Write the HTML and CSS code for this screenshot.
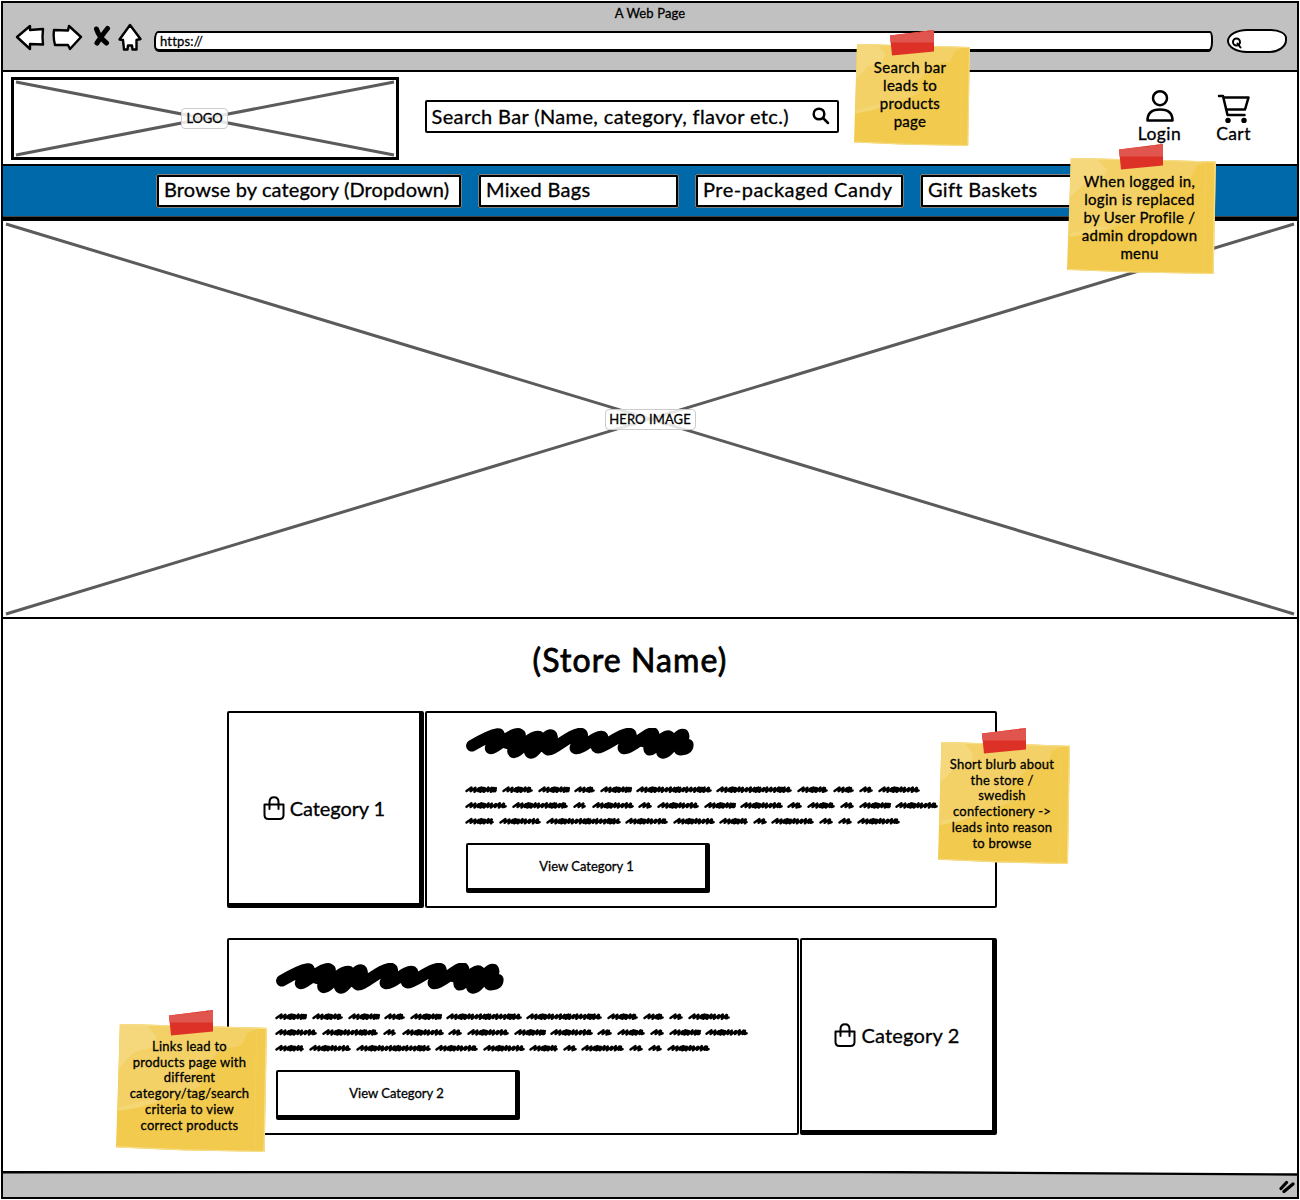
FILE: index.html
```html
<!DOCTYPE html>
<html lang="en">
<head>
<meta charset="utf-8">
<title>A Web Page</title>
<link rel="stylesheet" href="styles.css">
</head>
<body>
<svg class="defs" aria-hidden="true">
  <defs>
    <symbol id="paper" viewBox="0 0 100 100" preserveAspectRatio="none">
      <path d="M2.6 0 L50 1.4 L100 3 L98.5 100 L45 98.8 L0 96.5Z" fill="#f2ca4e"/>
      <path d="M2.6 0 L50 1.4 L95 3 L87 7 L83 17 L70 20 L57 34 L50 41 L57 48 L41 56 L26 62 L1 68Z" fill="#f3d166"/>
      <path d="M2.6 0 L20 .6 L27 10 L24 18 L12 22 L2 34Z" fill="#f5d87b"/>
      <path d="M2 65 L22 59 L29 60 L16 65 L2 68Z" fill="#f4d673"/>
      <path d="M2.6 .5 L50 1.8 L99.5 3.5 L98 99.5 L45 98.2 L.5 96" fill="none" stroke="#f7df8f" stroke-width=".8"/>
      <path d="M93 4 L92 99" fill="none" stroke="#f4d262" stroke-width=".5"/>
    </symbol>
    <symbol id="tape" viewBox="0 0 44 26">
      <path d="M0 5.500 L44 0 V21.500 L2 25.500Z" fill="#dd3127"/>
      <path d="M0 5.500 L44 0 V12.500 H.5Z" fill="#e0554d"/>
      <path d="M27 2.300 l3 -.4 -1 1.500z M36 1.200 l4 -.5 -2 1.500z" fill="#dd3127"/>
    </symbol>
    <symbol id="bag" viewBox="0 0 22 24">
      <path d="M1.500 8.500 H20.500 V19 Q20.500 23 16.500 23 H5.500 Q1.500 23 1.500 19Z M6.500 13 V6 Q6.500 1.200 11 1.200 T15.500 6 V13" fill="none" stroke="#000" stroke-width="2" stroke-linecap="round" stroke-linejoin="round"/>
    </symbol>
    <symbol id="scribble" viewBox="0 0 690 94">
      <path d="M17 54 Q70 22 96 18 C112 18 70 54 74 62 C82 66 136 14 160 18 C174 24 132 66 144 74 C158 76 196 20 220 26 C232 34 182 66 196 76 C210 76 244 14 258 22 C270 32 232 60 248 66 C262 70 322 14 348 17 C364 22 324 58 332 62 C350 66 396 20 412 26 C424 34 384 54 398 60 C420 60 470 14 496 17 C512 24 468 56 478 62 C500 64 552 10 567 16 C576 26 548 60 556 66 C570 68 600 16 616 26 C630 38 582 70 596 76 C620 74 640 14 658 20 C666 30 636 66 650 66 Q672 64 672 50" fill="none" stroke="#000" stroke-width="35" stroke-linecap="round" stroke-linejoin="round"/>
      <path d="M96 30 H270 L240 72 H150 L96 56Z M500 50 L560 28 H668 L660 66 H570Z M340 50 H410 V60 H345Z" fill="#000"/>
    </symbol>
  </defs>
</svg>

<div class="window">
  <header class="chrome">
    <div class="chrome-title"><span class="t-title">A Web Page</span></div>
    <div class="chrome-row">
      <svg class="ic-back" width="30" height="28" viewBox="0 0 30 28"><path d="M2 14 L15 3 L15 7 L28 6 L27.500 14 L28 21.500 L15 21 L15 26Z"/></svg>
      <svg class="ic-forward" width="31" height="28" viewBox="0 0 31 28"><path d="M2 7 L16 7.500 L17 3 L29 14 L18 26 L16 22 L3 22 Q1 15 2 7Z"/></svg>
      <svg class="ic-stop" width="18" height="22" viewBox="0 0 18 22"><path d="M3.500 4 Q6 12 13.500 18 M14.500 3.500 Q10 9 4 18"/></svg>
      <svg class="ic-home" width="24" height="29" viewBox="0 0 24 29"><path d="M12 2 L22.500 16 L18.500 17 L18.500 26.500 L14.500 26.500 L14 22.500 L10 22.500 L9.500 26.500 L6 26.500 L5 17 L1.500 16.500Z"/></svg>
      <div class="address"><span class="t-url">https://</span></div>
      <div class="chrome-search">
        <svg width="14" height="14" viewBox="0 0 14 14"><circle cx="5.500" cy="5" r="3.500"/><path d="M6.500 6.500 L9.500 10.500"/></svg>
      </div>
    </div>
  </header>

  <section class="masthead">
    <div class="logo crossed">
      <svg class="cross" viewBox="0 0 100 100" preserveAspectRatio="none"><path d="M0 0 L100 100 M0 100 L100 0"/></svg>
      <span class="tag t-logo">LOGO</span>
    </div>
    <div class="search"><span class="t-search">Search Bar (Name, category, flavor etc.)</span>
      <svg width="18" height="18" viewBox="0 0 18 18"><circle cx="7" cy="7" r="5.300"/><path d="M11 11 L16 16"/></svg>
    </div>
    <div class="action login">
      <svg width="30" height="34" viewBox="0 0 30 34"><circle cx="15" cy="9.200" r="7"/><path d="M2.500 31.500 Q2.500 20.500 15 20.500 T27.500 31.500Z"/></svg>
      <span class="t-login">Login</span>
    </div>
    <div class="action cart">
      <svg width="34" height="34" viewBox="0 0 34 34"><path d="M2 7 H6 L10.500 26 H27.500 M6.500 8.500 H31.500 L28 20.500 H9.500"/><circle class="wheel" cx="11" cy="31.500" r="1.500"/><circle class="wheel" cx="27" cy="31.500" r="1.500"/></svg>
      <span class="t-cart">Cart</span>
    </div>
  </section>

  <nav class="nav">
    <a class="nav-item nav-browse"><span class="t-browse">Browse by category (Dropdown)</span></a>
    <a class="nav-item nav-mixed"><span class="t-mixed">Mixed Bags</span></a>
    <a class="nav-item nav-candy"><span class="t-candy">Pre-packaged Candy</span></a>
    <a class="nav-item nav-gift"><span class="t-gift">Gift Baskets</span></a>
  </nav>

  <section class="hero crossed">
    <svg class="cross" viewBox="0 0 100 100" preserveAspectRatio="none"><path d="M0 0 L100 100 M0 100 L100 0"/></svg>
    <span class="tag t-hero">HERO IMAGE</span>
  </section>

  <main class="content">
    <h1><span class="t-store">(Store Name)</span></h1>
    <section class="feature">
      <div class="tile"><svg width="22" height="24"><use href="#bag"/></svg><span class="t-cat1">Category 1</span></div>
      <div class="panel panel-first">
        <svg class="scribble" width="230" height="31"><use href="#scribble"/></svg>
        <svg class="blurb" width="474" height="42"></svg>
        <a class="button"><span>View Category 1</span></a>
      </div>
    </section>
    <section class="feature">
      <div class="panel panel-second">
        <svg class="scribble" width="230" height="31"><use href="#scribble"/></svg>
        <svg class="blurb" width="474" height="42"></svg>
        <a class="button"><span>View Category 2</span></a>
      </div>
      <div class="tile"><svg width="22" height="24"><use href="#bag"/></svg><span class="t-cat2">Category 2</span></div>
    </section>
  </main>

  <footer class="status">
    <svg class="status-edge" viewBox="0 0 1294 6" preserveAspectRatio="none"><path d="M0 0 H860 L1294 3 V0Z" fill="#fff"/><path d="M0 1.200 L860 1 L1294 3.500" fill="none" stroke="#000" stroke-width="2.400"/></svg>
    <svg class="grip" width="18" height="14" viewBox="0 0 18 14"><path d="M4 8.500 L9.500 2.500 M7 11.500 L16 4"/></svg>
  </footer>
</div>

<aside class="note note-search"><svg class="sheet"><use href="#paper"/></svg><svg class="tape"><use href="#tape"/></svg>
  <p><span>Search bar</span><br>leads to<br>products<br>page</p></aside>
<aside class="note note-login"><svg class="sheet"><use href="#paper"/></svg><svg class="tape"><use href="#tape"/></svg>
  <p>When logged in,<br><span>login is replaced</span><br>by User Profile /<br>admin dropdown<br>menu</p></aside>
<aside class="note small note-blurb"><svg class="sheet"><use href="#paper"/></svg><svg class="tape"><use href="#tape"/></svg>
  <p>Short blurb about<br>the store /<br>swedish<br>confectionery -&gt;<br>leads into reason<br>to browse</p></aside>
<aside class="note small note-links"><svg class="sheet"><use href="#paper"/></svg><svg class="tape"><use href="#tape"/></svg>
  <p>Links lead to<br>products page with<br>different<br><span>category/tag/search</span><br>criteria to view<br>correct products</p></aside>
<script src="script.js"></script>
</body>
</html>
```
FILE: styles.css
```css
* { box-sizing: border-box; }
body {
  margin: 0;
  width: 1300px;
  height: 1200px;
  overflow: hidden;
  position: relative;
  background: #fff;
  color: #000;
  font-family: Lato, "Open Sans", sans-serif;
  -webkit-text-stroke: .3px #000;
}
span { white-space: nowrap; }
svg { display: block; flex: none; }
.defs { position: absolute; width: 0; height: 0; }
.window {
  margin: 1px;
  width: 1298px;
  height: 1198px;
  border: 2px solid #000;
  display: flex;
  flex-direction: column;
}
.chrome { height: 69px; background: #c1c1c1; border-bottom: 2px solid #000; flex: none; }
.chrome-title { height: 20px; line-height: 21px; text-align: center; font-size: 13px; letter-spacing: .14px; }
.chrome-row { display: flex; align-items: flex-start; padding-left: 12px; }
.chrome-row > svg { fill: #fff; stroke: #000; stroke-width: 2.4; stroke-linejoin: round; }
.ic-forward { margin-left: 7px; }
.chrome-row > .ic-stop { margin: 2px 0 0 10px; fill: none; stroke-width: 5; stroke-linecap: round; }
.ic-home { margin-left: 7px; }
.address {
  width: 1059px; height: 21px; margin: 8px 0 0 12px; padding-left: 4px;
  background: #fff; border: 2px solid #000; border-bottom-width: 3px; border-radius: 4px 3px 4px 5px / 9px 8px 10px 6px;
  font-size: 13px; line-height: 16px; letter-spacing: .18px;
}
.chrome-search {
  width: 60px; height: 24px; margin: 6px 0 0 14px; padding: 6px 0 0 2px;
  background: #fff; border: 2px solid #000; border-radius: 20px 16px 18px 20px / 12px 9px 13px 12px;
}
.chrome-search svg { fill: none; stroke: #000; stroke-width: 2; stroke-linecap: round; }
.masthead { height: 92px; flex: none; display: flex; padding: 5px 0 0 7.500px; }
.crossed { display: grid; grid-template: 100% / 100%; place-items: center; }
.crossed > * { grid-area: 1 / 1; }
.cross { width: 100%; height: 100%; overflow: visible; }
.cross path { stroke: #5b5b5b; stroke-width: 3; vector-effect: non-scaling-stroke; }
.tag {
  background: rgba(255, 255, 255, .85); border: 1px solid #ccc; border-radius: 4px;
  height: 21px; line-height: 18px; font-size: 13px; text-align: center; z-index: 1;
}
.logo { width: 388px; height: 83px; border: 3px solid #000; padding: 2px; }
.logo .tag { width: 47px; letter-spacing: -.1px; }
.search {
  width: 414px; height: 33px; margin: 23px 0 0 26px; padding: 0 7px 2px 5px;
  border: 2.500px solid #000; border-radius: 2px; font-size: 20px; line-height: 26px;
  display: flex; justify-content: space-between; align-items: center;
}
.t-search { letter-spacing: .37px; }
.search svg, .action svg { fill: none; stroke: #000; stroke-width: 2.500; stroke-linecap: round; stroke-linejoin: round; }
.action { width: 74px; display: flex; flex-direction: column; align-items: center; padding-top: 12px; font-size: 17.500px; line-height: 21px; letter-spacing: .4px; }
.action svg .wheel { fill: #000; }
.login { margin-left: 284px; }
.nav {
  height: 55px; flex: none; display: flex; gap: 16px; padding: 8px 0 0 153px;
  background: #0069aa; border-top: 2px solid #000; border-bottom: 2px solid #000; box-shadow: inset 0 -1px #444;
}
.nav-item {
  height: 34px; padding-left: 5px; background: #fff; border: 3px solid #000; outline: 1px solid #ffffff80;
  outline-offset: -1px; border-radius: 2px; font-size: 20px; line-height: 25px;
}
.nav-browse { width: 306px; letter-spacing: .13px; }
.nav-mixed { width: 201px; letter-spacing: .3px; }
.nav-candy { width: 209px; letter-spacing: .5px; }
.nav-gift { width: 200px; letter-spacing: .3px; }
.hero { height: 400px; flex: none; border-top: 2px solid #000; border-bottom: 2px solid #000; padding: 3px; }
.hero .tag { width: 91px; letter-spacing: .1px; }
.content { flex: none; height: 552px; padding-left: 224px; }
h1 { margin: 0 0 30px; width: 806px; height: 62px; padding-top: 20px; font-size: 32px; line-height: 41px; font-weight: 400; letter-spacing: 1.1px; text-align: center; -webkit-text-stroke: .8px #000; }
.feature { display: flex; width: 770px; margin-bottom: 30px; gap: 1px; }
.tile {
  width: 197px; height: 197px; display: flex; align-items: center; justify-content: center; gap: 5px; font-size: 20px;
  border: 2px solid #000; border-right-width: 5px; border-bottom-width: 5px; border-radius: 2px;
}
.t-cat1 { letter-spacing: -.1px; }
.t-cat2 { letter-spacing: .2px; }
.panel { width: 572px; height: 197px; border: 2px solid #000; border-radius: 2px; }
.panel-first { padding: 15px 0 0 38px; }
.panel-second { padding: 23px 0 0 46px; }
.panel-first .blurb { margin-top: 25px; }
.panel-second .blurb { margin-top: 17px; }
.blurb path { fill: none; stroke: #000; stroke-width: 2.400; stroke-linecap: round; stroke-linejoin: round; }
.button {
  display: block; width: 244px; height: 50px; margin: 17px 0 0 1px;
  border: 2px solid #000; border-right-width: 5px; border-bottom-width: 5px; border-radius: 2px;
  font-size: 13px; line-height: 43px; text-align: center;
}
.status { flex: 1; background: #c1c1c1; display: flex; flex-direction: column; justify-content: space-between; align-items: flex-end; }
.status-edge { width: 100%; height: 6px; }
.grip { margin: 0 2px 3px 0; }
.grip path { stroke: #000; stroke-width: 3.200; stroke-linecap: round; }
.note { position: absolute; z-index: 2; text-align: center; font-size: 15px; line-height: 18px; letter-spacing: .3px; }
.note p { position: relative; margin: 0 4px 0 0; padding-top: 14px; white-space: nowrap; }
.sheet { position: absolute; inset: 0; width: 100%; height: 100%; }
.tape { position: absolute; left: calc(50% - 22.500px); top: -14px; width: 44px; height: 26px; }
.note-search { left: 854px; top: 44px; width: 116px; height: 102px; }
.note-login { left: 1067px; top: 158px; width: 149px; height: 116px; }
.note.small { font-size: 13px; line-height: 15.700px; letter-spacing: .25px; }
.note.small p { padding-top: 15px; }
.note-blurb { left: 938px; top: 742px; width: 132px; height: 122px; }
.note-links { left: 116px; top: 1024px; width: 151px; height: 128px; }
```
FILE: script.js
```js
// Placeholder copy: every entry is [start, end] of one scribbled word.
const rows = [
  [[0,32],[37,68],[73,105],[109,130],[135,167],[171,247],[251,327],[332,363],[368,389],[394,408],[413,455]],
  [[0,42],[47,103],[108,121],[127,169],[173,187],[192,234],[239,271],[275,318],[322,337],[342,370],[375,389],[394,426],[430,473]],
  [[0,29],[34,76],[81,156],[160,203],[208,250],[254,283],[288,302],[306,349],[354,368],[373,387],[392,435]]
];
// Horizontal advance of successive pen strokes, loose then dense.
const steps = [5.4, 5.2, 5, 3.4, 3, 3.2, 5, 4.6];

function word(a, b, y) {
  let x = a + 1.5, i = 0, d = `M${x} ${y + 1.5}`;
  while (x < b - 6) {
    const s = steps[i % steps.length];
    const top = y - 2 + (i % 3) * .3;
    const low = y + 1.7 + (i % 2) * .6;
    d += ` L${(x + s - .4).toFixed(1)} ${top} L${(x + s - 1.3).toFixed(1)} ${low}`;
    x += s - 1.3;
    i++;
  }
  return d + ` L${b - 3} ${y - 1.5} L${b - 3.4} ${y + 1.8} L${b - 1.4} ${y + 1}`;
}

document.querySelectorAll('.blurb').forEach(svg => {
  const p = document.createElementNS('http://www.w3.org/2000/svg', 'path');
  p.setAttribute('d', rows.map((r, i) => r.map(w => word(w[0], w[1], 5.5 + i * 15.8)).join(' ')).join(' '));
  svg.append(p);
});
```
